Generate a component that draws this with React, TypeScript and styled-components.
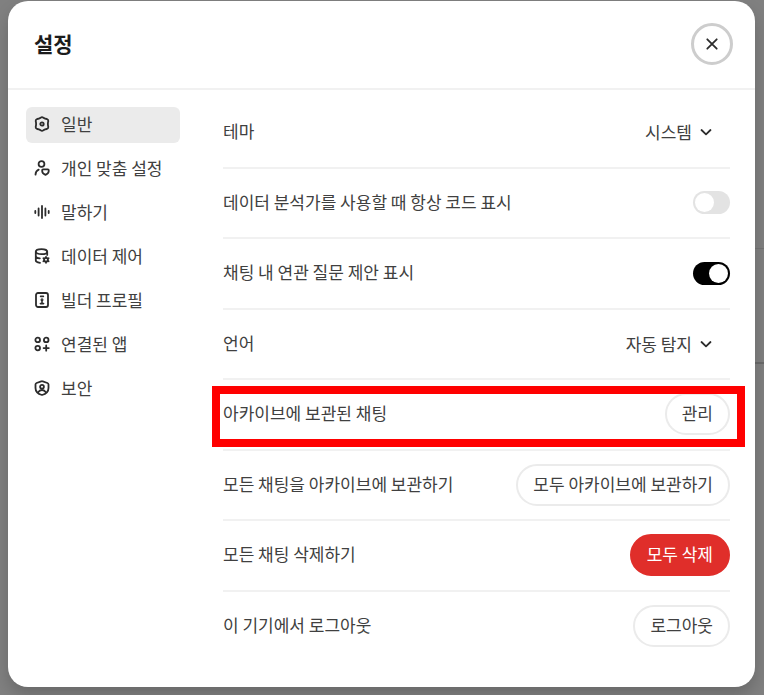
import React, { useState } from "react";
import styled, { createGlobalStyle } from "styled-components";

const GlobalStyle = createGlobalStyle`
  *, *::before, *::after { box-sizing: border-box; }
  body {
    margin: 0;
    background: #808080;
    color: #404040;
    font-family: "Noto Sans CJK KR", sans-serif;
    font-size: 17px;
    line-height: 24px;
  }
  button, select { font: inherit; color: inherit; }
`;

const Backdrop = styled.div`
  position: relative;
  display: flex;
  min-height: 100vh;
  padding: 1px 9px 8px 8px;
  overflow: hidden;
`;

const PageEdge = styled.div`
  position: absolute;
  right: 0;
  top: 248px;
  width: 9px;
  height: 116px;
  border-top: 1px solid #747474;
  border-bottom: 2px solid #6a6a6a;
`;

const Dialog = styled.div`
  position: relative;
  flex: 1;
  display: flex;
  flex-direction: column;
  background: #fff;
  border-radius: 20px;
  box-shadow: 0 8px 16px rgba(0, 0, 0, 0.18);
`;

const Header = styled.header`
  display: flex;
  align-items: center;
  justify-content: space-between;
  height: 89px;
  padding: 0 22px 2px 26px;
  border-bottom: 2px solid #f1f1f1;
`;

const Title = styled.h2`
  margin: 0;
  padding-bottom: 2px;
  font-size: 21px;
  line-height: 28px;
  font-weight: 700;
  color: #1c1c1c;
`;

const CloseButton = styled.button`
  display: grid;
  place-items: center;
  width: 42px;
  height: 42px;
  padding: 0;
  border: 3px solid #cdcdcd;
  border-radius: 50%;
  background: #fff;
`;

const Body = styled.div`
  flex: 1;
  display: flex;
  gap: 43px;
  padding: 8px 25px 27px 18px;
`;

const Sidebar = styled.nav`
  display: flex;
  flex-direction: column;
  gap: 8px;
  width: 154px;
  padding-top: 9px;
`;

const NavItem = styled.button<{ $active: boolean }>`
  display: flex;
  align-items: center;
  gap: 11px;
  height: 36px;
  padding: 0 8px 2px;
  border: 0;
  border-radius: 6px;
  background: ${(p) => (p.$active ? "#ebebeb" : "transparent")};
  white-space: nowrap;
`;

const Icon = styled.svg`
  flex: none;
  fill: none;
  stroke: #2c2c2c;
  stroke-width: 1.8;
  stroke-linecap: round;
  stroke-linejoin: round;
`;

const Panel = styled.section`
  flex: 1;
  display: flex;
  flex-direction: column;
`;

const Row = styled.div`
  position: relative;
  flex: 1;
  display: flex;
  align-items: center;
  justify-content: space-between;
  white-space: nowrap;
  & + & { border-top: 2px solid #f1f1f1; }
`;

const RowLabel = styled.label`
  padding-bottom: 2px;
`;

const Highlight = styled.div`
  position: absolute;
  inset: 6px -15px 2px -11px;
  border: 8px solid #ff0000;
  pointer-events: none;
`;

const SelectWrap = styled.span`
  display: flex;
  align-items: center;
  gap: 8px;
  padding-right: 18px;
`;

const Select = styled.select`
  appearance: none;
  field-sizing: content;
  padding: 0;
  border: 0;
  background: transparent;
`;

const Switch = styled.input`
  appearance: none;
  display: flex;
  align-items: center;
  width: 37px;
  height: 23px;
  margin: 0;
  padding: 2px;
  border-radius: 12px;
  background: #e3e3e3;
  &::before {
    content: "";
    width: 19px;
    height: 19px;
    border-radius: 50%;
    background: #fff;
  }
  &:checked { background: #000; justify-content: flex-end; }
`;

const PillButton = styled.button<{ $danger?: boolean }>`
  height: 42px;
  padding: 0 15px 2px;
  border: 2px solid ${(p) => (p.$danger ? "#e02e2a" : "#ebebeb")};
  border-radius: 21px;
  background: ${(p) => (p.$danger ? "#e02e2a" : "#fff")};
  color: ${(p) => (p.$danger ? "#fff" : "#404040")};
`;

const icons: Record<string, React.ReactNode> = {
  general: (
    <>
      <path d="M6.600 1.700Q8 .7 9.400 1.700 11 2.900 12.900 3 14.400 3.600 14.300 5.100 13.500 8 14.300 10.900 14.400 12.400 12.900 13 11 13.100 9.400 14.300 8 15.300 6.600 14.300 5 13.100 3.100 13 1.600 12.400 1.700 10.900 2.500 8 1.700 5.100 1.600 3.600 3.100 3 5 2.900 6.600 1.700Z" />
      <circle cx="8" cy="8" r="1.700" />
    </>
  ),
  personal: (
    <>
      <circle cx="7.500" cy="4" r="2.900" />
      <path d="M1.500 14.600c.1-2.400 1.300-4.100 3.200-4.900M8.200 10c0-.5.3-.7.8-.7h4.900c.5 0 .8.2.8.7v1.300c0 1.800-1.500 2.800-3.200 3.500-1.700-.7-3.300-1.700-3.300-3.500Z" />
    </>
  ),
  speech: <path d="M1.300 7v2M4.600 4.400v7.200M8 2v12M11.400 4.400v7.200M14.700 7v2" />,
  data: (
    <>
      <ellipse cx="7.500" cy="3.700" rx="5.700" ry="2.500" />
      <path d="M1.800 3.700v8.800c0 1.200 1.600 2 4.200 2.300M13.200 3.700v3.200M1.800 8c0 1.300 1.700 2.200 4 2.400" />
      <circle cx="12" cy="11.800" r="1.900" />
      <path d="M12 8.800v1M12 13.800v1M9.400 10.300l.9.500M13.700 12.800l.9.500M9.400 13.300l.9-.5M13.700 10.800l.9-.5" />
    </>
  ),
  builder: (
    <>
      <rect x="2" y="1" width="12" height="14" rx="2" />
      <path d="M6.600 4.400h2.800M6.400 11.600h3.200M8 9.500v1.500" strokeWidth="1.600" />
      <circle cx="8" cy="7.800" r=".6" />
    </>
  ),
  apps: (
    <>
      <circle cx="3.700" cy="3.900" r="2.300" />
      <circle cx="12.200" cy="3.900" r="2.300" />
      <circle cx="3.700" cy="12.100" r="2.300" />
      <path d="M12.200 9.500v5.200M9.600 12.100h5.200" />
    </>
  ),
  security: (
    <>
      <path d="M7.200 1.400c.5-.3 1.100-.3 1.600 0l4.600 1.600c.7.3 1.100.8 1.100 1.500V8c0 3.500-2.800 6-6.500 7-3.700-1-6.500-3.500-6.500-7V4.500c0-.7.4-1.200 1.100-1.500Z" />
      <circle cx="8" cy="6.700" r="1.900" />
      <path d="M4.300 12.200c.8-1.500 2.100-2.200 3.700-2.200s2.900.7 3.700 2.200" />
    </>
  ),
};

const navigation = [
  { id: "general", label: "일반" },
  { id: "personal", label: "개인 맞춤 설정" },
  { id: "speech", label: "말하기" },
  { id: "data", label: "데이터 제어" },
  { id: "builder", label: "빌더 프로필" },
  { id: "apps", label: "연결된 앱" },
  { id: "security", label: "보안" },
];

function SelectField({ id, options }: { id: string; options: string[] }) {
  return (
    <SelectWrap>
      <Select id={id}>
        {options.map((option) => (
          <option key={option}>{option}</option>
        ))}
      </Select>
      <Icon width="12" height="12" viewBox="0 0 12 12" aria-hidden="true">
        <path d="m1.500 4 4.500 4.300L10.500 4" />
      </Icon>
    </SelectWrap>
  );
}

export default function App() {
  const [active, setActive] = useState("general");
  const [showCode, setShowCode] = useState(false);
  const [suggest, setSuggest] = useState(true);

  return (
    <>
      <GlobalStyle />
      <Backdrop>
        <PageEdge />
        <Dialog role="dialog" aria-labelledby="settings-title">
          <Header>
            <Title id="settings-title">설정</Title>
            <CloseButton aria-label="닫기">
              <Icon width="14" height="14" viewBox="0 0 14 14" aria-hidden="true">
                <path d="m2.300 2.300 9.400 9.400M11.700 2.300l-9.400 9.400" />
              </Icon>
            </CloseButton>
          </Header>
          <Body>
            <Sidebar>
              {navigation.map((item) => (
                <NavItem key={item.id} $active={active === item.id} onClick={() => setActive(item.id)}>
                  <Icon width="16" height="16" viewBox="0 0 16 16" aria-hidden="true">
                    {icons[item.id]}
                  </Icon>
                  {item.label}
                </NavItem>
              ))}
            </Sidebar>
            <Panel>
              <Row>
                <RowLabel htmlFor="theme">테마</RowLabel>
                <SelectField id="theme" options={["시스템"]} />
              </Row>
              <Row>
                <RowLabel htmlFor="code">데이터 분석가를 사용할 때 항상 코드 표시</RowLabel>
                <Switch id="code" type="checkbox" role="switch" checked={showCode} onChange={(e) => setShowCode(e.target.checked)} />
              </Row>
              <Row>
                <RowLabel htmlFor="suggest">채팅 내 연관 질문 제안 표시</RowLabel>
                <Switch id="suggest" type="checkbox" role="switch" checked={suggest} onChange={(e) => setSuggest(e.target.checked)} />
              </Row>
              <Row>
                <RowLabel htmlFor="language">언어</RowLabel>
                <SelectField id="language" options={["자동 탐지"]} />
              </Row>
              <Row>
                <RowLabel htmlFor="manage">아카이브에 보관된 채팅</RowLabel>
                <PillButton id="manage">관리</PillButton>
                <Highlight />
              </Row>
              <Row>
                <RowLabel htmlFor="archive">모든 채팅을 아카이브에 보관하기</RowLabel>
                <PillButton id="archive">모두 아카이브에 보관하기</PillButton>
              </Row>
              <Row>
                <RowLabel htmlFor="delete">모든 채팅 삭제하기</RowLabel>
                <PillButton id="delete" $danger>모두 삭제</PillButton>
              </Row>
              <Row>
                <RowLabel htmlFor="logout">이 기기에서 로그아웃</RowLabel>
                <PillButton id="logout">로그아웃</PillButton>
              </Row>
            </Panel>
          </Body>
        </Dialog>
      </Backdrop>
    </>
  );
}
